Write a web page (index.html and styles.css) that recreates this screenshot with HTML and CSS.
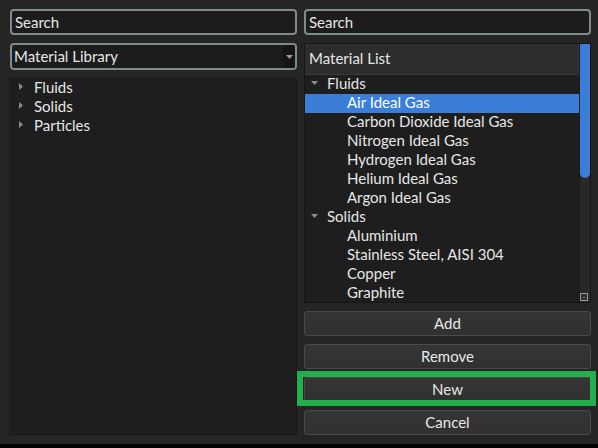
FILE: index.html
```html
<!DOCTYPE html>
<html>
<head>
<meta charset="utf-8">
<link rel="stylesheet" href="styles.css">
</head>
<body>
<div class="app">
  <div class="col left">
    <div class="field">Search</div>
    <div class="field combo">
      <span>Material Library</span>
      <span class="combo-btn"><svg width="7" height="4" viewBox="0 0 7 4"><path d="M0 0H7L3.5 4Z" fill="#9a9a9a"/></svg></span>
    </div>
    <div class="tree">
      <div class="row"><svg class="arr" width="4" height="7" viewBox="0 0 4 7"><path d="M0 0L4 3.5L0 7Z" fill="#8c8c8c"/></svg><span>Fluids</span></div>
      <div class="row"><svg class="arr" width="4" height="7" viewBox="0 0 4 7"><path d="M0 0L4 3.5L0 7Z" fill="#8c8c8c"/></svg><span>Solids</span></div>
      <div class="row"><svg class="arr" width="4" height="7" viewBox="0 0 4 7"><path d="M0 0L4 3.5L0 7Z" fill="#8c8c8c"/></svg><span>Particles</span></div>
    </div>
  </div>
  <div class="col right">
    <div class="field">Search</div>
    <div class="list">
      <div class="list-main">
        <div class="header">Material List</div>
        <div class="rows">
          <div class="lrow cat"><svg class="darr" width="7" height="4" viewBox="0 0 7 4"><path d="M0 0H7L3.5 4Z" fill="#8c8c8c"/></svg><span>Fluids</span></div>
          <div class="lrow item sel">Air Ideal Gas</div>
          <div class="lrow item">Carbon Dioxide Ideal Gas</div>
          <div class="lrow item">Nitrogen Ideal Gas</div>
          <div class="lrow item">Hydrogen Ideal Gas</div>
          <div class="lrow item">Helium Ideal Gas</div>
          <div class="lrow item">Argon Ideal Gas</div>
          <div class="lrow cat"><svg class="darr" width="7" height="4" viewBox="0 0 7 4"><path d="M0 0H7L3.5 4Z" fill="#8c8c8c"/></svg><span>Solids</span></div>
          <div class="lrow item">Aluminium</div>
          <div class="lrow item">Stainless Steel, AISI 304</div>
          <div class="lrow item">Copper</div>
          <div class="lrow item">Graphite</div>
        </div>
      </div>
      <div class="scrollbar">
        <div class="thumb"></div>
        <div class="grip"><span></span></div>
      </div>
    </div>
    <div class="btn">Add</div>
    <div class="btn">Remove</div>
    <div class="btn-wrap">
      <div class="btn">New</div>
      <div class="highlight"></div>
    </div>
    <div class="btn">Cancel</div>
  </div>
</div>
</body>
</html>
```
FILE: styles.css
```css
html {
  background: #000;
  margin: 0;
}
body {
  margin: 0;
  font-family: "Lato", "Open Sans", sans-serif;
  font-size: 15px;
  color: #e6e6e6;
}
.app {
  height: 444px;
  box-sizing: border-box;
  background: #252525;
  display: flex;
  gap: 7px;
  padding: 9px 7px 9px 9px;
}
.col {
  width: 288px;
  display: flex;
  flex-direction: column;
  gap: 8px;
}
.right {
  width: 287px;
}
.field {
  height: 26px;
  box-sizing: border-box;
  border: 2px solid #7f8c89;
  border-radius: 4px;
  background: #1c1c1c;
  padding: 0 0 0 3px;
  display: flex;
  align-items: center;
}
.left .field {
  margin-left: 1px;
}
.combo {
  height: 27px;
  justify-content: space-between;
  padding: 0 0 0 2px;
}
.combo span:first-child {
  padding-bottom: 2px;
}
.combo-btn {
  width: 12px;
  align-self: stretch;
  background: #151515;
  display: flex;
  align-items: center;
  justify-content: center;
  border-radius: 0 2px 2px 0;
}
.tree {
  flex: 1;
  background: #1e1e1e;
  border: 1px solid #181818;
}
.row {
  height: 19px;
  box-sizing: border-box;
  padding-bottom: 4px;
  display: flex;
  align-items: center;
}
.row .arr {
  margin-left: 9px;
  margin-right: 11px;
}
.list {
  height: 260px;
  box-sizing: border-box;
  border: 1px solid #161616;
  background: #1e1e1e;
  display: flex;
  overflow: hidden;
}
.list-main {
  flex: 1;
  display: flex;
  flex-direction: column;
  overflow: hidden;
}
.header {
  height: 31px;
  box-sizing: border-box;
  background: #2d2d2d;
  border-right: 1px solid #383838;
  border-bottom: 1px solid #3a3a3a;
  display: flex;
  align-items: center;
  padding: 0 0 3px 4px;
  flex-shrink: 0;
}
.lrow {
  height: 19px;
  box-sizing: border-box;
  padding-bottom: 4px;
  display: flex;
  align-items: center;
  flex-shrink: 0;
}
.cat .darr {
  margin-left: 6px;
  margin-right: 9px;
}
.item {
  padding-left: 42px;
}
.sel {
  background: #3a7ed8;
  color: #fff;
}
.scrollbar {
  width: 10px;
  background: #282828;
  border-left: 1px solid #1a1a1a;
  display: flex;
  flex-direction: column;
  justify-content: space-between;
}
.thumb {
  height: 134px;
  background: #3a7ed8;
  border-radius: 1px 1px 5px 5px;
}
.grip {
  width: 8px;
  height: 8px;
  margin: 0 0 1px 0;
  box-sizing: border-box;
  border: 1px solid #9a9a9a;
  background: #2e2e2e;
  display: flex;
  align-items: center;
  justify-content: center;
}
.grip span {
  width: 2px;
  height: 1px;
  background: #888;
}
.btn {
  height: 25px;
  box-sizing: border-box;
  border: 1px solid #4a4a4a;
  border-radius: 3px;
  background: linear-gradient(#353535, #303030);
  display: flex;
  align-items: center;
  justify-content: center;
  padding-bottom: 2px;
  color: #e8e8e8;
}
.btn-wrap {
  position: relative;
}
.highlight {
  position: absolute;
  left: -7px;
  top: -6px;
  right: -5px;
  bottom: -4px;
  border: 6px solid #21b04b;
  pointer-events: none;
}
```
